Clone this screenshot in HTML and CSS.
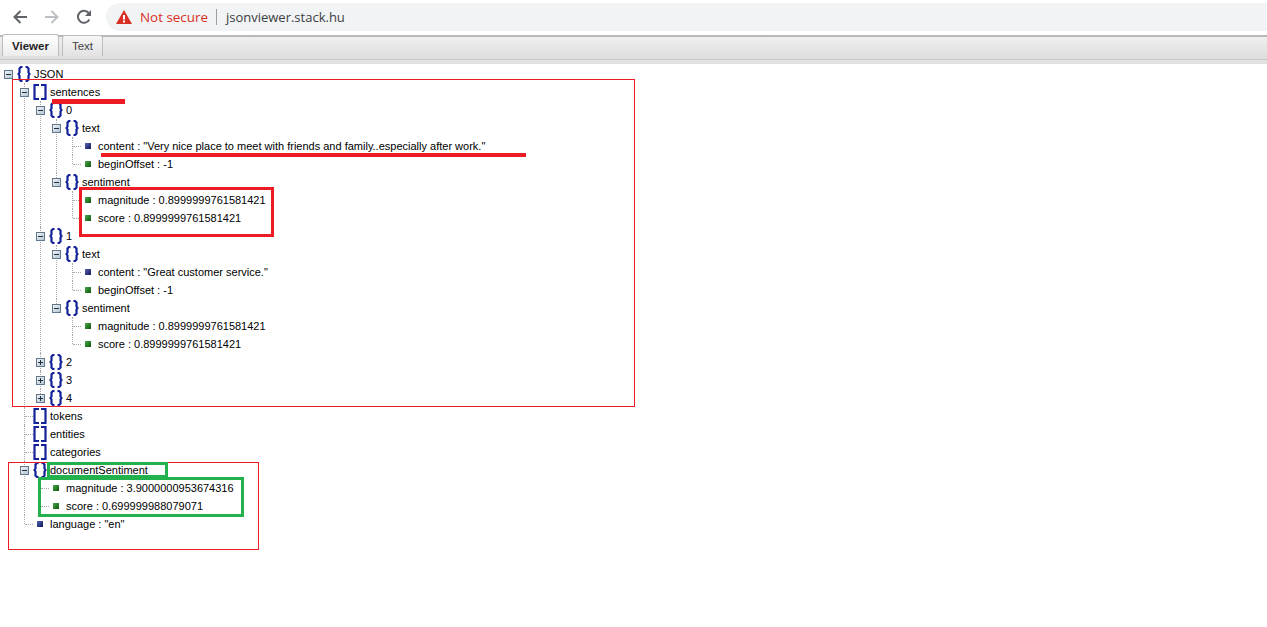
FILE: index.html
```html
<!DOCTYPE html>
<html lang="en">
<head>
<meta charset="utf-8">
<title>JSON Viewer</title>
<link rel="stylesheet" href="styles.css">
</head>
<body>
<svg class="defs" width="0" height="0" aria-hidden="true">
  <defs><linearGradient id="boxfill" x1="0" y1="0" x2="1" y2="1"><stop offset="0" stop-color="#f2f5f7"/><stop offset="1" stop-color="#b4c2ce"/></linearGradient></defs>
  <symbol id="obj" viewBox="0 0 14 16"><path d="M5.500 1H4L2.500 2.500V6.500L1.500 8L2.500 9.500V13.500L4 15H5.500M8.500 1H10L11.500 2.500V6.500L12.500 8L11.500 9.500V13.500L10 15H8.500" fill="none" stroke="#14229a" stroke-width="2.200"/></symbol>
  <symbol id="arr" viewBox="0 0 14 16"><path d="M6 1H1.500V15H6M8 1H12.500V15H8" fill="none" stroke="#14229a" stroke-width="2.200"/></symbol>
  <symbol id="minus" viewBox="0 0 9 9"><rect x=".5" y=".5" width="8" height="8" fill="url(#boxfill)" stroke="#62788f"/><path d="M2 4.500H7" stroke="#1f2f44"/></symbol>
  <symbol id="plus" viewBox="0 0 9 9"><rect x=".5" y=".5" width="8" height="8" fill="url(#boxfill)" stroke="#62788f"/><path d="M2 4.500H7M4.500 2V7" stroke="#1f2f44"/></symbol>
</svg>
<header class="chrome">
  <svg class="nav" width="16" height="16" viewBox="0 0 16 16"><path d="M15 8H2.500M8.500 2L2.500 8L8.500 14" fill="none" stroke="#5f6368" stroke-width="2"/></svg>
  <svg class="nav" width="16" height="16" viewBox="0 0 16 16"><path d="M1 8H13.500M7.500 2L13.500 8L7.500 14" fill="none" stroke="#bdc1c6" stroke-width="2"/></svg>
  <svg class="nav" width="16" height="16" viewBox="0 0 16 16"><path d="M13.300 10.500A6 6 0 1 1 12.600 4" fill="none" stroke="#5f6368" stroke-width="2"/><path d="M15 1V7H9Z" fill="#5f6368"/></svg>
  <div class="omnibox">
    <svg width="16" height="14" viewBox="0 0 16 14"><path d="M8 0L16 14H0Z" fill="#d93025"/><path d="M7 5H9V9.500H7ZM7 10.500H9V12.500H7Z" fill="#fff"/></svg>
    <span class="insecure">Not secure</span>
    <span class="divider"></span>
    <span class="url">jsonviewer.stack.hu</span>
  </div>
</header>
<nav class="tabs">
  <span class="tab active">Viewer</span>
  <span class="tab">Text</span>
</nav>
<main class="content">
<ul class="tree root">
<li><div class="row"><svg class="tog"><use href="#minus"/></svg><svg class="ico"><use href="#obj"/></svg><span class="lbl">JSON</span></div>
 <ul class="tree">
 <li><div class="row"><svg class="tog"><use href="#minus"/></svg><svg class="ico"><use href="#arr"/></svg><span class="lbl">sentences</span></div>
  <ul class="tree">
  <li><div class="row"><svg class="tog"><use href="#minus"/></svg><svg class="ico"><use href="#obj"/></svg><span class="lbl">0</span></div>
   <ul class="tree">
   <li><div class="row"><svg class="tog"><use href="#minus"/></svg><svg class="ico"><use href="#obj"/></svg><span class="lbl">text</span></div>
    <ul class="tree">
    <li class="leaf"><div class="row"><i class="sq str"></i><span class="lbl">content : "Very nice place to meet with friends and family..especially after work."</span></div></li>
    <li class="leaf"><div class="row"><i class="sq num"></i><span class="lbl">beginOffset : -1</span></div></li>
    </ul></li>
   <li><div class="row"><svg class="tog"><use href="#minus"/></svg><svg class="ico"><use href="#obj"/></svg><span class="lbl">sentiment</span></div>
    <ul class="tree">
    <li class="leaf"><div class="row"><i class="sq num"></i><span class="lbl">magnitude : 0.8999999761581421</span></div></li>
    <li class="leaf"><div class="row"><i class="sq num"></i><span class="lbl">score : 0.8999999761581421</span></div></li>
    </ul></li>
   </ul></li>
  <li><div class="row"><svg class="tog"><use href="#minus"/></svg><svg class="ico"><use href="#obj"/></svg><span class="lbl">1</span></div>
   <ul class="tree">
   <li><div class="row"><svg class="tog"><use href="#minus"/></svg><svg class="ico"><use href="#obj"/></svg><span class="lbl">text</span></div>
    <ul class="tree">
    <li class="leaf"><div class="row"><i class="sq str"></i><span class="lbl">content : "Great customer service."</span></div></li>
    <li class="leaf"><div class="row"><i class="sq num"></i><span class="lbl">beginOffset : -1</span></div></li>
    </ul></li>
   <li><div class="row"><svg class="tog"><use href="#minus"/></svg><svg class="ico"><use href="#obj"/></svg><span class="lbl">sentiment</span></div>
    <ul class="tree">
    <li class="leaf"><div class="row"><i class="sq num"></i><span class="lbl">magnitude : 0.8999999761581421</span></div></li>
    <li class="leaf"><div class="row"><i class="sq num"></i><span class="lbl">score : 0.8999999761581421</span></div></li>
    </ul></li>
   </ul></li>
  <li><div class="row"><svg class="tog"><use href="#plus"/></svg><svg class="ico"><use href="#obj"/></svg><span class="lbl">2</span></div></li>
  <li><div class="row"><svg class="tog"><use href="#plus"/></svg><svg class="ico"><use href="#obj"/></svg><span class="lbl">3</span></div></li>
  <li><div class="row"><svg class="tog"><use href="#plus"/></svg><svg class="ico"><use href="#obj"/></svg><span class="lbl">4</span></div></li>
  </ul></li>
 <li class="leaf"><div class="row"><svg class="ico noTog"><use href="#arr"/></svg><span class="lbl">tokens</span></div></li>
 <li class="leaf"><div class="row"><svg class="ico noTog"><use href="#arr"/></svg><span class="lbl">entities</span></div></li>
 <li class="leaf"><div class="row"><svg class="ico noTog"><use href="#arr"/></svg><span class="lbl">categories</span></div></li>
 <li><div class="row"><svg class="tog"><use href="#minus"/></svg><svg class="ico"><use href="#obj"/></svg><span class="lbl">documentSentiment</span></div>
  <ul class="tree">
  <li class="leaf"><div class="row"><i class="sq num"></i><span class="lbl">magnitude : 3.9000000953674316</span></div></li>
  <li class="leaf"><div class="row"><i class="sq num"></i><span class="lbl">score : 0.699999988079071</span></div></li>
  </ul></li>
 <li class="leaf"><div class="row"><i class="sq str"></i><span class="lbl">language : "en"</span></div></li>
 </ul></li>
</ul>
<div class="mark red-thin m1"></div>
<div class="mark red-thin m2"></div>
<div class="mark red-bar m3"></div>
<div class="mark red-bar m4"></div>
<div class="mark red-thick m5"></div>
<div class="mark green-thin m6"></div>
<div class="mark green-thick m7"></div>
</main>
</body>
</html>
```
FILE: styles.css
```css
* { box-sizing: border-box; }
html, body { margin: 0; height: 100%; background: #fff; overflow: hidden; }
body { font-family: "Liberation Sans", Arial, sans-serif; font-size: 11px; color: #000; }
.defs { position: absolute; }

.chrome { height: 35px; display: flex; align-items: center; padding: 0 0 1px 12px; background: #fff; }
.nav { flex: none; margin-right: 16px; }
.nav:nth-child(3) { margin-right: 14px; }
.omnibox { flex: 1; height: 28px; display: flex; align-items: center; padding-left: 10px; background: #f1f3f4; border-radius: 14px 0 0 14px; font-family: "Open Sans", "Noto Sans", sans-serif; font-size: 13px; }
.insecure { color: #d93025; margin-left: 8px; font-size: 13.400px; }
.divider { width: 1px; height: 16px; background: #9aa0a6; margin: 0 9px 0 8px; }
.url { color: #3c4043; }

.tabs { height: 29px; display: flex; align-items: flex-end; gap: 3px; padding: 3px 0 4px 2px; border-top: 2px solid #b9b9b9; border-bottom: 4px solid #e2e2e2; background: linear-gradient(#efefef, #dcdcdc); box-shadow: inset 0 -1px 0 #c8c8c8; }
.tab { height: 21px; width: 41px; display: flex; align-items: center; justify-content: center; border: 1px solid #bdbdbd; border-bottom: 0; border-radius: 3px 3px 0 0; background: linear-gradient(#f6f6f6, #e2e2e2); color: #444; font-size: 11.500px; }
.tab.active { height: 22px; width: 57px; background: linear-gradient(#fff, #ececec); font-weight: bold; color: #222; }

.content { position: relative; }
.tree { list-style: none; margin: 0; padding: 0 0 0 16px; }
.tree.root { padding: 1px 0 0 4px; }
.tree li { position: relative; }
.tree ul li::before { content: ""; position: absolute; left: 4px; top: 0; bottom: 0; border-left: 1px dotted #aaa; }
.tree ul li:last-child::before { bottom: auto; height: 9px; }
.tree .leaf::after { content: ""; position: absolute; left: 5px; top: 9px; width: 8px; border-top: 1px dotted #aaa; }
.row { position: relative; z-index: 1; height: 18px; display: flex; align-items: center; }
.tog { flex: none; width: 9px; height: 9px; margin-right: 4px; }
.ico { flex: none; width: 14px; height: 16px; }
.ico.noTog { margin-left: 13px; }
.lbl { margin-left: 3px; white-space: nowrap; }
.sq { flex: none; width: 6px; height: 6px; margin-left: 17px; margin-right: 7px; }
.sq + .lbl { margin-left: 0; }
.sq.num { background: linear-gradient(135deg, #4aa84a, #0d550d); }
.sq.str { background: linear-gradient(135deg, #5565b5, #0e175a); }

.mark { position: absolute; z-index: 2; }
.red-thin { border: 1px solid #ed1c24; }
.red-bar { background: #ed1c24; }
.red-thick { border: 3px solid #ed1c24; }
.green-thin { border: 3px solid #22b14c; }
.green-thick { border: 3px solid #22b14c; }
.m1 { left: 12px; top: 15px; width: 623px; height: 328px; }
.m2 { left: 8px; top: 398px; width: 251px; height: 88px; }
.m3 { left: 52px; top: 35px; width: 73px; height: 5px; }
.m4 { left: 101px; top: 89px; width: 425px; height: 4px; }
.m5 { left: 79px; top: 123px; width: 195px; height: 50px; }
.m6 { left: 47px; top: 398px; width: 121px; height: 16px; }
.m7 { left: 38px; top: 413px; width: 206px; height: 40px; }
```
